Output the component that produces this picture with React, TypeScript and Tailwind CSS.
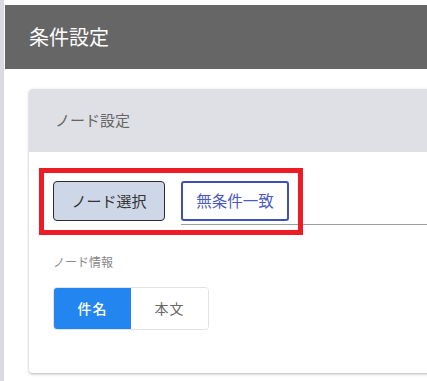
export default function App() {
    const font = { fontFamily: '"Noto Sans CJK JP", "Noto Sans", sans-serif' };

    return (
        <div className="flex h-[381px] w-[427px] overflow-hidden bg-white" style={font}>
            {/* Left rail */}
            <div className="w-[4px] shrink-0 bg-[#d9dadf]" />

            <div className="flex min-w-0 flex-1 flex-col pl-[1px] pt-[5px]">
                {/* Title bar */}
                <div className="flex h-[64px] shrink-0 items-center bg-[#666666] pl-[24px]">
                    <h1 className="text-[20px] leading-none text-white">条件設定</h1>
                </div>

                {/* Card */}
                <div className="-mr-6 ml-[24px] mt-[20px] flex h-[284px] flex-col rounded-[4px] bg-white shadow-[0_1px_3px_rgba(0,0,0,0.3)]">
                    <div className="flex h-[63px] items-center rounded-t-[4px] bg-[#dfe0e5] pl-[26px]">
                        <span className="text-[15px] text-[#666666]">ノード設定</span>
                    </div>

                    <div className="relative flex flex-col pl-[24px] pt-[29px]">
                        {/* Mode buttons */}
                        <div className="flex items-start">
                            <button className="flex h-[40px] w-[112px] items-center justify-center rounded-[4px] border border-[#2b2b2b] bg-[#cdd7e8] text-[15px] text-[#333333]">
                                ノード選択
                            </button>
                            <div className="ml-[16px] flex-1 border-b border-[#9e9e9e] pb-[3px]">
                                <button className="flex h-[40px] w-[108px] items-center justify-center rounded-[3px] border-2 border-[#3f51b5] bg-white text-[15.5px] text-[#4a5bc4]">
                                    無条件一致
                                </button>
                            </div>
                        </div>

                        {/* Annotation frame */}
                        <div className="pointer-events-none absolute left-[10px] top-[16px] h-[67px] w-[264px] border-[5px] border-[#ed1c24]" />

                        <span className="mt-[28px] text-[12px] leading-[18px] text-[#888888]">ノード情報</span>

                        {/* Segmented toggle */}
                        <div className="mt-[16px] flex h-[43px] w-[156px] overflow-hidden rounded-[4px] border border-[#e2e2e2]">
                            <button className="flex w-[77px] items-center justify-center bg-[#2285f0] text-[14px] font-medium tracking-[1px] text-white">
                                件名
                            </button>
                            <button className="flex flex-1 items-center justify-center bg-white text-[14px] tracking-[1px] text-[#666666]">
                                本文
                            </button>
                        </div>
                    </div>
                </div>
            </div>
        </div>
    );
}
